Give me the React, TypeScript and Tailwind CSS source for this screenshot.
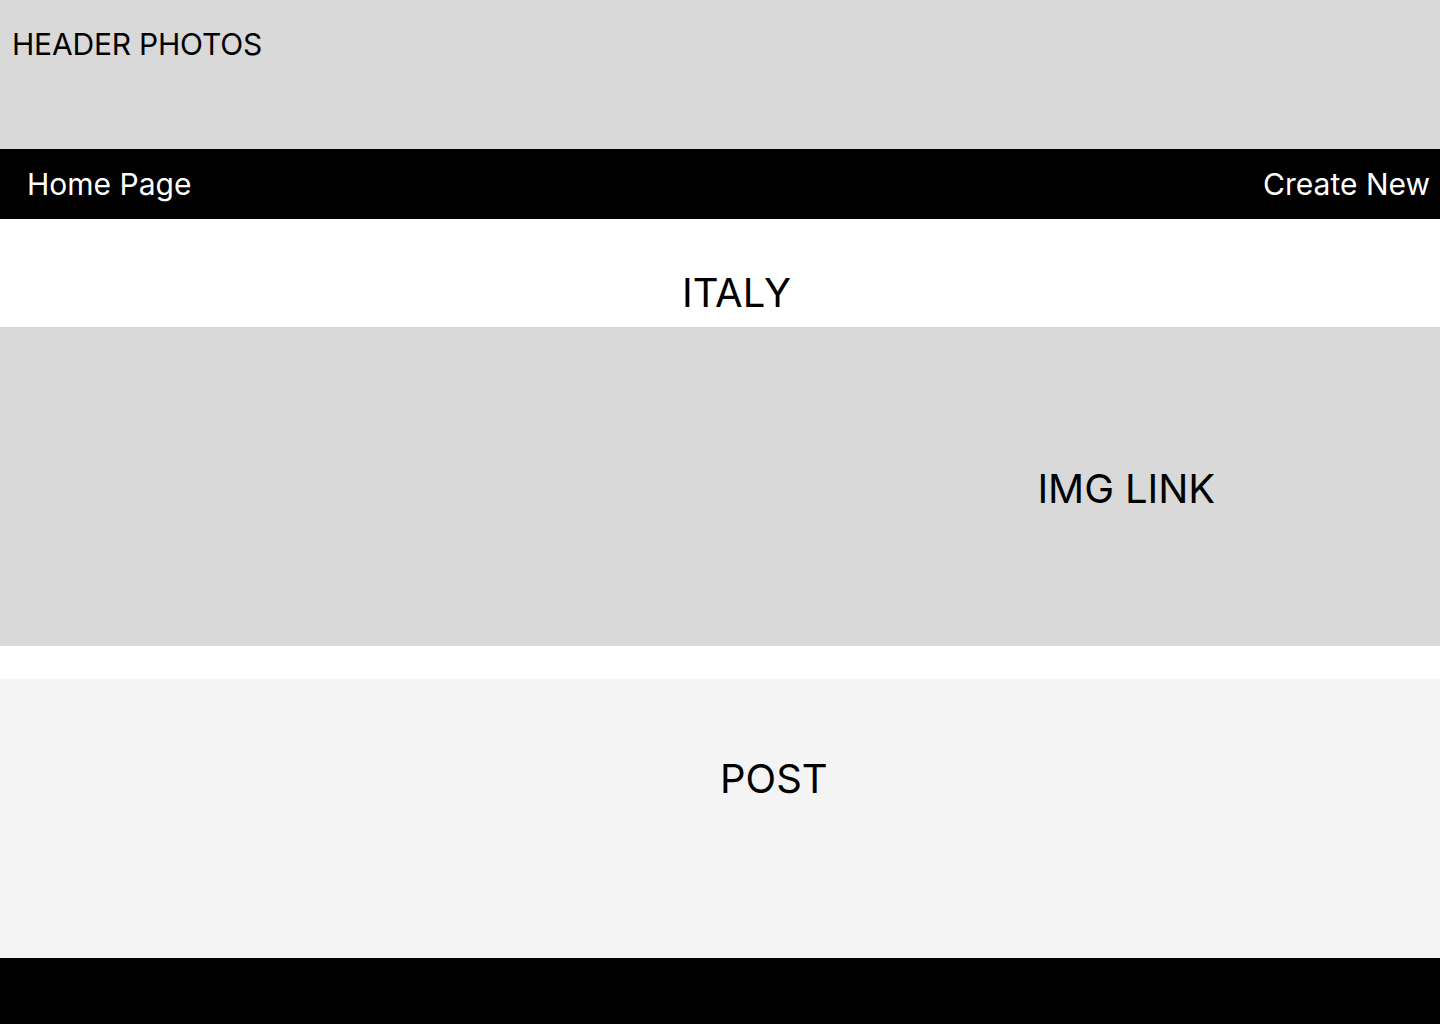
export default function App() {
  return (
    <div className="w-[1440px] min-h-[1024px] bg-white text-black font-['Inter',sans-serif]">
      <header className="h-[149px] bg-[#d9d9d9] pl-[12px] pt-[26px]">
        <div className="text-[30px] leading-[36px] tracking-[-0.2px]">HEADER PHOTOS</div>
      </header>
      <nav className="h-[70px] bg-black text-white flex items-center justify-between pl-[27px] pr-[10px]">
        <a className="text-[30px] leading-[36px]">Home Page</a>
        <a className="text-[30px] leading-[36px]">Create New</a>
      </nav>
      <section className="h-[108px] pt-[50px] flex justify-center pl-[33px]">
        <h1 className="text-[40px] leading-[48px]">ITALY</h1>
      </section>
      <section className="h-[319px] bg-[#d9d9d9] flex items-center justify-end pr-[225px] pt-[4px]">
        <div className="text-[40px] leading-[48px] tracking-[-0.1px]">IMG LINK</div>
      </section>
      <div className="h-[33px]" />
      <section className="h-[279px] bg-[#f4f4f4] grid grid-cols-2 pt-[76px]">
        <div />
        <div className="text-[40px] leading-[48px]">POST</div>
      </section>
      <footer className="h-[66px] bg-black" />
    </div>
  );
}
